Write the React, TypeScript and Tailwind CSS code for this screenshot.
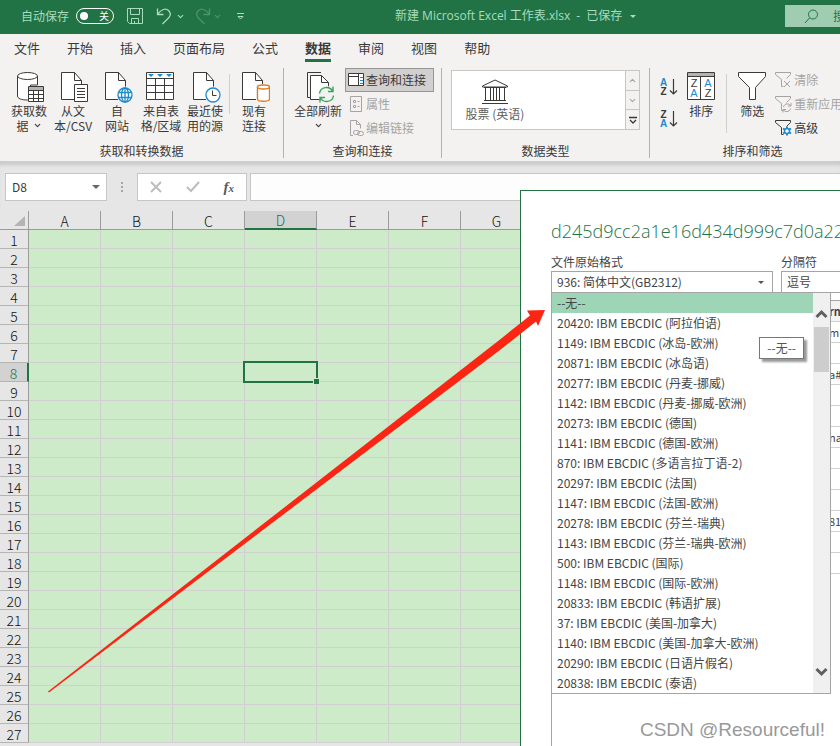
import type { ReactNode } from "react";
import { ChevronDown, ChevronUp } from "lucide-react";

const tabs = ["文件", "开始", "插入", "页面布局", "公式", "数据", "审阅", "视图", "帮助"];
const columns = ["A", "B", "C", "D", "E", "F", "G"];
const rows = Array.from({ length: 27 }, (_, i) => i + 1);

const encodings = [
  "--无--",
  "20420: IBM EBCDIC (阿拉伯语)",
  "1149: IBM EBCDIC (冰岛-欧洲)",
  "20871: IBM EBCDIC (冰岛语)",
  "20277: IBM EBCDIC (丹麦-挪威)",
  "1142: IBM EBCDIC (丹麦-挪威-欧洲)",
  "20273: IBM EBCDIC (德国)",
  "1141: IBM EBCDIC (德国-欧洲)",
  "870: IBM EBCDIC (多语言拉丁语-2)",
  "20297: IBM EBCDIC (法国)",
  "1147: IBM EBCDIC (法国-欧洲)",
  "20278: IBM EBCDIC (芬兰-瑞典)",
  "1143: IBM EBCDIC (芬兰-瑞典-欧洲)",
  "500: IBM EBCDIC (国际)",
  "1148: IBM EBCDIC (国际-欧洲)",
  "20833: IBM EBCDIC (韩语扩展)",
  "37: IBM EBCDIC (美国-加拿大)",
  "1140: IBM EBCDIC (美国-加拿大-欧洲)",
  "20290: IBM EBCDIC (日语片假名)",
  "20838: IBM EBCDIC (泰语)",
];

const previewRows = ["m", "", "a#", "", "", "na", "", "", "", "81", "", ""];

function Icon({ children }: { children: ReactNode }) {
  return (
    <svg width="32" height="32" viewBox="0 0 32 32" fill="none" stroke="#3b3a39" className="shrink-0">
      {children}
    </svg>
  );
}

function SmallIcon({ children, color = "#3b3a39" }: { children: ReactNode; color?: string }) {
  return (
    <svg width="18" height="18" viewBox="0 0 18 18" fill="none" stroke={color} className="shrink-0">
      {children}
    </svg>
  );
}

function Page() {
  return (
    <>
      <path d="M4.5 1.5h13l7 8v19h-20z" fill="#fff" />
      <path d="M17.5 1.5v8h7" />
    </>
  );
}

function DatabaseIcon() {
  return (
    <Icon>
      <path d="M4.500 5v20c0 2.500 4 4 10 4h3V14h7V5" fill="#fff" />
      <ellipse cx="14.500" cy="5" rx="10" ry="3.500" fill="#fff" />
      <path d="M15.500 15.500h15v15h-15z" fill="#fff" />
      <path d="M16 16h14v3H16z" fill="#b5b3b1" stroke="none" />
      <path d="M15.500 19.500h15M15.500 23.500h15M15.500 27.500h15M20.500 19v11M25.500 19v11" />
    </Icon>
  );
}

function TextFileIcon() {
  return (
    <Icon>
      <Page />
      <path d="M17.500 13.500h13v17h-13z" fill="#fff" />
      <path d="M20 17.500h8M20 20.500h8M20 23.500h8M20 26.500h8" />
    </Icon>
  );
}

function WebIcon() {
  return (
    <Icon>
      <Page />
      <circle cx="24" cy="24" r="8.500" fill="#f3f2f1" stroke="none" />
      <g stroke="#1e8bcd" strokeWidth="1.300">
        <circle cx="24" cy="24" r="7" fill="#fff" />
        <ellipse cx="24" cy="24" rx="3.500" ry="7" />
        <path d="M17.500 21.500h13M17.500 26.500h13M24 17v14" />
      </g>
    </Icon>
  );
}

function TableIcon() {
  return (
    <Icon>
      <path d="M1.500 1.500h27v27h-27z" fill="#fff" />
      <path d="M1.500 7.500h27M1.500 14.500h27M1.500 21.500h27M10.500 7.500v21M19.500 7.500v21" />
      <path d="M3 3h6l-3 3zM12 3h6l-3 3zM21 3h6l-3 3z" fill="#1e8bcd" stroke="none" />
    </Icon>
  );
}

function RecentIcon() {
  return (
    <Icon>
      <Page />
      <circle cx="24" cy="24" r="8.500" fill="#f3f2f1" stroke="none" />
      <circle cx="24" cy="24" r="7" fill="#fff" stroke="#1e8bcd" strokeWidth="1.300" />
      <path d="M23.500 19.500v5h4" />
    </Icon>
  );
}

function ConnectionIcon() {
  return (
    <Icon>
      <Page />
      <path d="M18 13h14v18H18z" fill="#f3f2f1" stroke="none" />
      <g stroke="#e07b1a" strokeWidth="1.300">
        <path d="M19.500 16v12c0 3 12 3 12 0V16" fill="#fff" />
        <ellipse cx="25.500" cy="16" rx="6" ry="2" fill="#fff" />
      </g>
    </Icon>
  );
}

function RefreshIcon() {
  return (
    <Icon>
      <path d="M5.500 26.500V1.500H19M5.500 26.500H8" />
      <path d="M8.500 4.500h11l7 7v17h-18z" fill="#fff" />
      <path d="M19.500 4.500v7h7" />
      <circle cx="24.500" cy="23.500" r="8.500" fill="#f3f2f1" stroke="none" />
      <g stroke="#35a35a" strokeWidth="1.400">
        <path d="M17.500 22.500c1-7 10-8 13.500-2M31 15.500v5h-5M31.500 24.500c-1 7-10 8-13.500 2M18 31.500v-5h5" />
      </g>
    </Icon>
  );
}

function SortIcon() {
  return (
    <Icon>
      <path d="M2.500 1.500h27v27h-27z" fill="#fff" />
      <path d="M3 2h26v3H3z" fill="#b5b3b1" stroke="none" />
      <path d="M2.500 5.500h27M15.500 5.500v23" />
      <g stroke="none" fontSize="11" textAnchor="middle" fontFamily="Liberation Sans, sans-serif">
        <text x="9" y="16" fill="#3b3a39">Z</text>
        <text x="9" y="26" fill="#1e8bcd">A</text>
        <text x="23" y="16" fill="#1e8bcd">A</text>
        <text x="23" y="26" fill="#3b3a39">Z</text>
      </g>
    </Icon>
  );
}

function FilterIcon() {
  return (
    <Icon>
      <path d="M2.500 1.500h27v4l-10 11v12h-6v-12l-11-11z" fill="#fff" />
    </Icon>
  );
}

function Funnel() {
  return <path d="M7.500 15.500v-7l-6-5v-2h15v2l-4 4M7.500 15.500h2" />;
}

function SortButton({ label, first, second }: { label: string; first: string; second: string }) {
  return (
    <button aria-label={label} className="flex h-8 items-center gap-px">
      <span className="flex flex-col font-['Liberation_Sans',sans-serif] text-[10px] leading-[9px] font-bold">
        <span className={first === "A" ? "text-[#1e8bcd]" : "text-[#3b3a39]"}>{first}</span>
        <span className={second === "A" ? "text-[#1e8bcd]" : "text-[#3b3a39]"}>{second}</span>
      </span>
      <svg width="10" height="18" viewBox="0 0 10 18" fill="none" stroke="#3b3a39" strokeWidth="1.200">
        <path d="M5.500 1v15M2 12.500l3.500 3.500L9 12.500" />
      </svg>
    </button>
  );
}

function BigButton({ icon, children }: { icon: ReactNode; children: ReactNode }) {
  return (
    <button className="flex w-11 shrink-0 flex-col items-center whitespace-nowrap leading-[15px]">
      {icon}
      {children}
    </button>
  );
}

function Group({ label, width, children }: { label: string; width: string; children: ReactNode }) {
  return (
    <section className={`flex h-[90px] shrink-0 flex-col justify-between border-r border-[#b3b1af] ${width}`}>
      <div className="flex">{children}</div>
      <h2 className="text-center leading-[14px]">{label}</h2>
    </section>
  );
}

function TitleBar() {
  return (
    <header className="flex h-[34px] shrink-0 items-center bg-[#217346] pb-[2px] text-[#a8dcbc]">
      <div className="flex w-[395px] shrink-0 items-center pl-[21px]">
        <label className="flex items-center gap-[7px] leading-4">
          自动保存
          <input type="checkbox" className="sr-only" />
          <span className="flex h-4 w-[38px] items-center justify-between rounded-full border border-white pr-1 pl-[3px] text-[10px] text-white">
            <span className="h-2 w-2 rounded-full bg-white" />
            关
          </span>
        </label>
        <button aria-label="保存" className="ml-3">
          <SmallIcon color="#a8dcbc">
            <path d="M1.500 1.500h15v15h-13l-2-2zM4.500 1.500v6h9v-6M5.500 16.500v-5h7v5M8.500 16v-2" />
          </SmallIcon>
        </button>
        <button aria-label="撤消" className="ml-3 flex items-center gap-[2px]">
          <SmallIcon color="#a8dcbc">
            <path d="M1.500 1.500v6h6M1.500 7.500C5 2 10 1 12.500 3.500s2 5.500 0 7.500L6.500 17" strokeWidth="1.300" />
          </SmallIcon>
          <ChevronDown size={9} strokeWidth={3} />
        </button>
        <button aria-label="恢复" className="ml-2 flex items-center gap-[2px] text-[#4d946b]">
          <SmallIcon color="#4d946b">
            <path d="M16.500 1.500v6h-6M16.500 7.500C13 2 8 1 5.500 3.500s-2 5.500 0 7.500l6 6" strokeWidth="1.300" />
          </SmallIcon>
          <ChevronDown size={9} strokeWidth={3} />
        </button>
        <button aria-label="自定义快速访问工具栏" className="ml-[14px]">
          <svg width="10" height="10" viewBox="0 0 10 10" fill="none" stroke="#a8dcbc">
            <path d="M1 2.500h7M2 5.500l2.500 2.500L7 5.500z" />
          </svg>
        </button>
      </div>
      <h1 className="font-['Open_Sans','Noto_Sans_CJK_SC',sans-serif] leading-4 whitespace-nowrap">
        新建 Microsoft Excel 工作表.xlsx <span className="mx-[3px]">-</span> 已保存
      </h1>
      <svg width="6" height="3" viewBox="0 0 6 3" className="ml-2 shrink-0" fill="#a8dcbc">
        <path d="M0 0h6L3 3z" />
      </svg>
      <label className="ml-auto flex h-[22px] w-[55px] shrink-0 items-center gap-[14px] overflow-hidden bg-[#a0cdb2] pl-[19px] text-[#217346]">
        <svg width="15" height="15" viewBox="0 0 15 15" fill="none" stroke="#217346" className="shrink-0">
          <circle cx="9" cy="5.500" r="4.500" />
          <path d="M5.500 9L1 14" />
        </svg>
        <input aria-label="搜索" placeholder="搜索" className="w-24 shrink-0 outline-none placeholder:text-[#217346]" />
      </label>
    </header>
  );
}

function Ribbon() {
  return (
    <div className="shrink-0 overflow-hidden border-b-2 border-[#cfcdcc] bg-[#f3f2f1]">
      <nav className="flex h-[34px] gap-[27px] pl-[14px] text-[13px]">
        {tabs.map((tab) => (
          <button
            key={tab}
            className={
              tab === "数据"
                ? "h-7 shrink-0 border-b-[3px] border-[#217346] pt-[3px] font-bold leading-5"
                : "h-7 shrink-0 border-b-[3px] border-transparent pt-[3px] leading-5"
            }
          >
            {tab}
          </button>
        ))}
      </nav>
      <div className="flex pb-[3px]">
        <Group label="获取和转换数据" width="w-[284px]">
          <div className="flex pt-[3px] pl-[7px]">
            <BigButton icon={<DatabaseIcon />}>
              <span>获取数</span>
              <span className="flex items-center gap-1">
                据 <ChevronDown size={9} strokeWidth={3} />
              </span>
            </BigButton>
            <BigButton icon={<TextFileIcon />}>
              <span>从文</span>
              <span>本/CSV</span>
            </BigButton>
            <BigButton icon={<WebIcon />}>
              <span>自</span>
              <span>网站</span>
            </BigButton>
            <BigButton icon={<TableIcon />}>
              <span>来自表</span>
              <span>格/区域</span>
            </BigButton>
            <BigButton icon={<RecentIcon />}>
              <span>最近使</span>
              <span>用的源</span>
            </BigButton>
            <div className="mx-[2px] mt-[3px] h-10 w-px bg-[#d2d0ce]" />
            <BigButton icon={<ConnectionIcon />}>
              <span>现有</span>
              <span>连接</span>
            </BigButton>
          </div>
        </Group>
        <Group label="查询和连接" width="w-[158px]">
          <div className="flex w-[61px] justify-center pt-[3px] pl-[7px]">
            <BigButton icon={<RefreshIcon />}>
              <span>全部刷新</span>
              <ChevronDown size={9} strokeWidth={3} className="mt-[3px]" />
            </BigButton>
          </div>
          <div className="flex flex-col">
            <button className="flex h-6 items-center border border-[#979593] bg-[#d2d0ce] pr-[7px] pl-[2px] leading-4">
              <SmallIcon>
                <path d="M.5 2.500h15v12H.5z" fill="#fff" />
                <path d="M1 5.500h9M10.500 3v12" />
                <path d="M12 6.500h3M12 9.500h3M12 12.500h3" stroke="#1e8bcd" />
              </SmallIcon>
              查询和连接
            </button>
            <button disabled className="flex h-6 items-center px-[3px] leading-4 text-[#a6a4a2]">
              <SmallIcon color="#a6a4a2">
                <path d="M2.500 1.500h11v15h-11zM5.500 5.500h2v2h-2zM5.500 10.500h2v2h-2zM9.500 6.500h2M9.500 11.500h2" />
              </SmallIcon>
              属性
            </button>
            <button disabled className="flex h-6 items-center px-[3px] leading-4 text-[#a6a4a2]">
              <SmallIcon color="#a6a4a2">
                <path d="M5 16.500H2.500v-15h6l4 4v4M8.500 1.500v4h4" />
                <rect x="5.500" y="11.500" width="6" height="4" rx="2" />
                <rect x="9.500" y="12.500" width="6" height="4" rx="2" />
              </SmallIcon>
              编辑链接
            </button>
          </div>
        </Group>
        <Group label="数据类型" width="w-[208px]">
          <div className="mt-[2px] ml-[9px] flex h-[60px] w-[189px] border border-[#c8c6c4] bg-white">
            <button className="flex w-[86px] flex-col items-center pt-2 leading-[18px] text-[#605e5c]">
              <svg width="28" height="26" viewBox="0 0 28 26" fill="none" stroke="#3b3a39">
                <path d="M1.500 8v-1L14 1l12.500 6v1zM3 8.500h22M4.500 9v12M9.500 9v12M12.500 9v12M15.500 9v12M18.500 9v12M23.500 9v12M3 21.500h22M1 24.500h26" />
              </svg>
              股票 (英语)
            </button>
            <div className="ml-auto flex w-[14px] flex-col border-l border-[#c8c6c4] bg-[#f3f2f1] text-[#a6a4a2]">
              <button aria-label="上一行" className="flex flex-1 items-center justify-center">
                <ChevronUp size={9} strokeWidth={3} />
              </button>
              <button aria-label="下一行" className="flex flex-1 items-center justify-center border-y border-[#c8c6c4]">
                <ChevronDown size={9} strokeWidth={3} />
              </button>
              <button aria-label="其他" className="flex flex-1 items-center justify-center">
                <svg width="8" height="8" viewBox="0 0 8 8" fill="none" stroke="#3b3a39">
                  <path d="M0 1.500h8M1 4l3 3 3-3" strokeWidth="1.300" />
                </svg>
              </button>
            </div>
          </div>
        </Group>
        <Group label="排序和筛选" width="w-[206px]">
          <div className="flex flex-col pt-[3px] pl-[10px]">
            <SortButton label="升序" first="A" second="Z" />
            <SortButton label="降序" first="Z" second="A" />
          </div>
          <div className="flex pt-[3px] pl-px">
            <BigButton icon={<SortIcon />}>
              <span>排序</span>
            </BigButton>
            <div className="mx-[3px] mt-[3px] h-[59px] w-px bg-[#d2d0ce]" />
            <BigButton icon={<FilterIcon />}>
              <span>筛选</span>
            </BigButton>
          </div>
          <div className="flex flex-col whitespace-nowrap">
            <button disabled className="flex h-6 items-center gap-[2px] text-[#a6a4a2]">
              <SmallIcon color="#a6a4a2">
                <Funnel />
                <path d="M10 10l6 6M16 10l-6 6" />
              </SmallIcon>
              清除
            </button>
            <button disabled className="flex h-6 items-center gap-[2px] text-[#a6a4a2]">
              <SmallIcon color="#a6a4a2">
                <Funnel />
                <path d="M9.500 12c1-4 6-4 7-1M17 8v3h-3M16.500 13.500c-1 4-6 4-7 1M9 17.500v-3h3" />
              </SmallIcon>
              重新应用
            </button>
            <button className="flex h-6 items-center gap-[2px]">
              <SmallIcon>
                <Funnel />
                <g stroke="#1e8bcd">
                  <path d="M13 7.500v9M9 9.500l8 5M9 14.500l8-5" strokeWidth="2" />
                  <circle cx="13" cy="12" r="2.500" fill="#fff" strokeWidth="1.500" />
                </g>
              </SmallIcon>
              高级
            </button>
          </div>
        </Group>
      </div>
    </div>
  );
}

function FormulaBar() {
  return (
    <div className="flex h-12 shrink-0 items-start pt-[10px] pl-[5px] shadow-[inset_0_4px_4px_-3px_#bbb]">
      <label className="flex h-7 w-[102px] shrink-0 items-center border border-[#c6c6c6] bg-white px-[6px]">
        <input aria-label="名称框" defaultValue="D8" className="w-full min-w-0 outline-none" />
        <svg width="8" height="4" viewBox="0 0 8 4" fill="#666" className="shrink-0">
          <path d="M0 0h8L4 4z" />
        </svg>
      </label>
      <svg width="30" height="28" viewBox="0 0 30 28" fill="#a6a6a6" className="shrink-0">
        <path d="M14 9h2v2h-2zM14 13h2v2h-2zM14 17h2v2h-2z" />
      </svg>
      <div className="flex h-7 w-[110px] shrink-0 items-center justify-around border border-[#c6c6c6] bg-white">
        <button aria-label="取消">
          <svg width="12" height="12" viewBox="0 0 12 12" fill="none" stroke="#bdbdbd" strokeWidth="2">
            <path d="M1 1l10 10M11 1L1 11" />
          </svg>
        </button>
        <button aria-label="输入">
          <svg width="14" height="12" viewBox="0 0 14 12" fill="none" stroke="#bdbdbd" strokeWidth="2">
            <path d="M1 6l4 4 8-9" />
          </svg>
        </button>
        <button className="font-['Liberation_Serif',serif] text-[15px] leading-5 font-bold text-[#5a5a5a] italic">
          f<span className="text-[11px]">x</span>
        </button>
      </div>
      <input
        aria-label="编辑栏"
        className="ml-[3px] h-7 min-w-0 flex-1 border border-r-0 border-[#c6c6c6] bg-[#fdfdfd] px-2 outline-none"
      />
    </div>
  );
}

function Sheet() {
  return (
    <div className="min-h-0 flex-1 overflow-hidden">
      <table className="w-max table-fixed border-separate border-spacing-0 text-[14px] leading-4 text-[#111]">
        <thead>
          <tr className="h-[19px]">
            <th className="w-[29px] border-r border-b border-[#9b9b9b] p-0">
              <svg width="28" height="18" viewBox="0 0 28 18" fill="#b4b4b4">
                <path d="M25 5v10H14z" />
              </svg>
            </th>
            {columns.map((col) => (
              <th
                key={col}
                className={
                  col === "D"
                    ? "w-[72px] border-r border-b-2 border-r-[#9b9b9b] border-b-[#217346] bg-[#d2d2d2] p-0 pt-[2px] leading-[15px] font-light text-[#217346]"
                    : "w-[72px] border-r border-b border-[#9b9b9b] p-0 pt-[2px] font-light"
                }
              >
                {col}
              </th>
            ))}
          </tr>
        </thead>
        <tbody>
          {rows.map((row) => (
            <tr key={row} className="h-[19px]">
              <th
                className={
                  row === 8
                    ? "border-r-2 border-b border-r-[#217346] border-b-[#b5b5b5] bg-[#d2d2d2] p-0 pt-[2px] font-light text-[#217346]"
                    : "border-r border-b border-r-[#9b9b9b] border-b-[#b5b5b5] p-0 pt-[2px] font-light"
                }
              >
                {row}
              </th>
              {columns.map((col) => (
                <td key={col} className="relative border-r border-b border-[#cfd0cf] bg-[#cdeac9] p-0">
                  {row === 8 && col === "D" && (
                    <div className="absolute -inset-[2px] z-10 border-2 border-[#217346]">
                      <div className="absolute -right-[3px] -bottom-[3px] h-[6px] w-[6px] border-t border-l border-[#cdeac9] bg-[#217346]" />
                    </div>
                  )}
                </td>
              ))}
            </tr>
          ))}
        </tbody>
      </table>
    </div>
  );
}

function EncodingList() {
  return (
    <div className="absolute top-full left-0 z-10 flex w-[280px] border border-[#a5a5a5] bg-white">
      <ul role="listbox" aria-label="文件原始格式" className="flex-1">
        {encodings.map((name, i) => (
          <li
            key={name}
            role="option"
            aria-selected={i === 0}
            className={i === 0 ? "h-5 bg-[#9fd5b7] pl-[5px] leading-5" : "h-5 pl-[5px] leading-5"}
          >
            {name}
          </li>
        ))}
      </ul>
      <div className="flex w-[17px] flex-col items-center bg-[#f0f0f0] py-[15px] text-[#606060]">
        <svg width="13" height="13" viewBox="0 0 13 13" fill="none" stroke="currentColor" strokeWidth="3">
          <path d="M1.500 9l5-5 5 5" />
        </svg>
        <div className="mt-[6px] h-[45px] w-[15px] bg-[#cdcdcd]" />
        <svg width="13" height="13" viewBox="0 0 13 13" fill="none" stroke="currentColor" strokeWidth="3" className="mt-auto">
          <path d="M1.500 4l5 5 5-5" />
        </svg>
      </div>
      <div
        role="tooltip"
        className="absolute top-11 right-[26px] border border-[#767676] bg-white px-[7px] leading-5 text-[#555] shadow-[3px_3px_2px_#999]"
      >
        --无--
      </div>
    </div>
  );
}

function ImportDialog() {
  return (
    <div
      role="dialog"
      className="absolute top-[190px] right-0 bottom-0 left-[520px] flex flex-col overflow-hidden border-t border-l border-[#217346] bg-white pt-[26px] pl-[30px] text-[#444]"
    >
      <h2 className="font-['Open_Sans',sans-serif] text-[18px] leading-7 font-light whitespace-nowrap text-[#217346]">
        d245d9cc2a1e16d434d999c7d0a22
      </h2>
      <div className="mt-2 flex items-start gap-2 leading-[18px]">
        <div className="relative w-[222px] shrink-0">
          <label htmlFor="origin" className="block">文件原始格式</label>
          <div className="flex h-[21px] items-center border border-b-0 border-[#a5a5a5] pr-[8px]">
            <select id="origin" className="h-5 min-w-0 flex-1 appearance-none pl-[5px] outline-none">
              <option>936: 简体中文(GB2312)</option>
            </select>
            <svg width="6" height="3" viewBox="0 0 6 3" fill="#555">
              <path d="M0 0h6L3 3z" />
            </svg>
          </div>
          <EncodingList />
        </div>
        <div className="w-[222px] shrink-0">
          <label htmlFor="delimiter" className="block">分隔符</label>
          <select id="delimiter" className="block h-[22px] w-full appearance-none border border-[#a5a5a5] pl-[5px] outline-none">
            <option>逗号</option>
          </select>
        </div>
      </div>
      <div className="mt-[7px] flex-1 border-t border-l border-[#a5a5a5]">
        <table className="w-full border-separate border-spacing-0 text-[11px]">
          <thead>
            <tr className="h-[21px]">
              <th className="border-b border-[#d0d0d0] bg-[#f3f3f3] p-0 pl-[277px] text-left leading-5">rn</th>
            </tr>
          </thead>
          <tbody>
            {previewRows.map((text, i) => (
              <tr key={i} className="h-[21px]">
                <td className="border-b border-[#d0d0d0] p-0 pl-[277px] leading-5">{text}</td>
              </tr>
            ))}
          </tbody>
        </table>
      </div>
    </div>
  );
}

export default function App() {
  return (
    <main className="relative flex h-screen flex-col overflow-hidden bg-[#e6e6e6] font-['Noto_Sans_CJK_SC',sans-serif] text-[12px] text-[#3b3a39]">
      <TitleBar />
      <Ribbon />
      <FormulaBar />
      <Sheet />
      <ImportDialog />
      {/* pointer from the sheet to the encoding list */}
      <svg width="560" height="700" viewBox="0 0 560 700" fill="#fb2513" className="pointer-events-none absolute top-0 left-0 z-20">
        <path d="M48 691.500L500 339.500l30-24-3-5 18-.5-7 16-2-4.500L500 350 49 692.500z" />
      </svg>
      <p className="absolute right-[15px] bottom-1 z-20 font-['Liberation_Sans',sans-serif] text-[19px] leading-6 text-[#999] [text-shadow:1px_1px_0_#fff]">
        CSDN @Resourceful!
      </p>
    </main>
  );
}
